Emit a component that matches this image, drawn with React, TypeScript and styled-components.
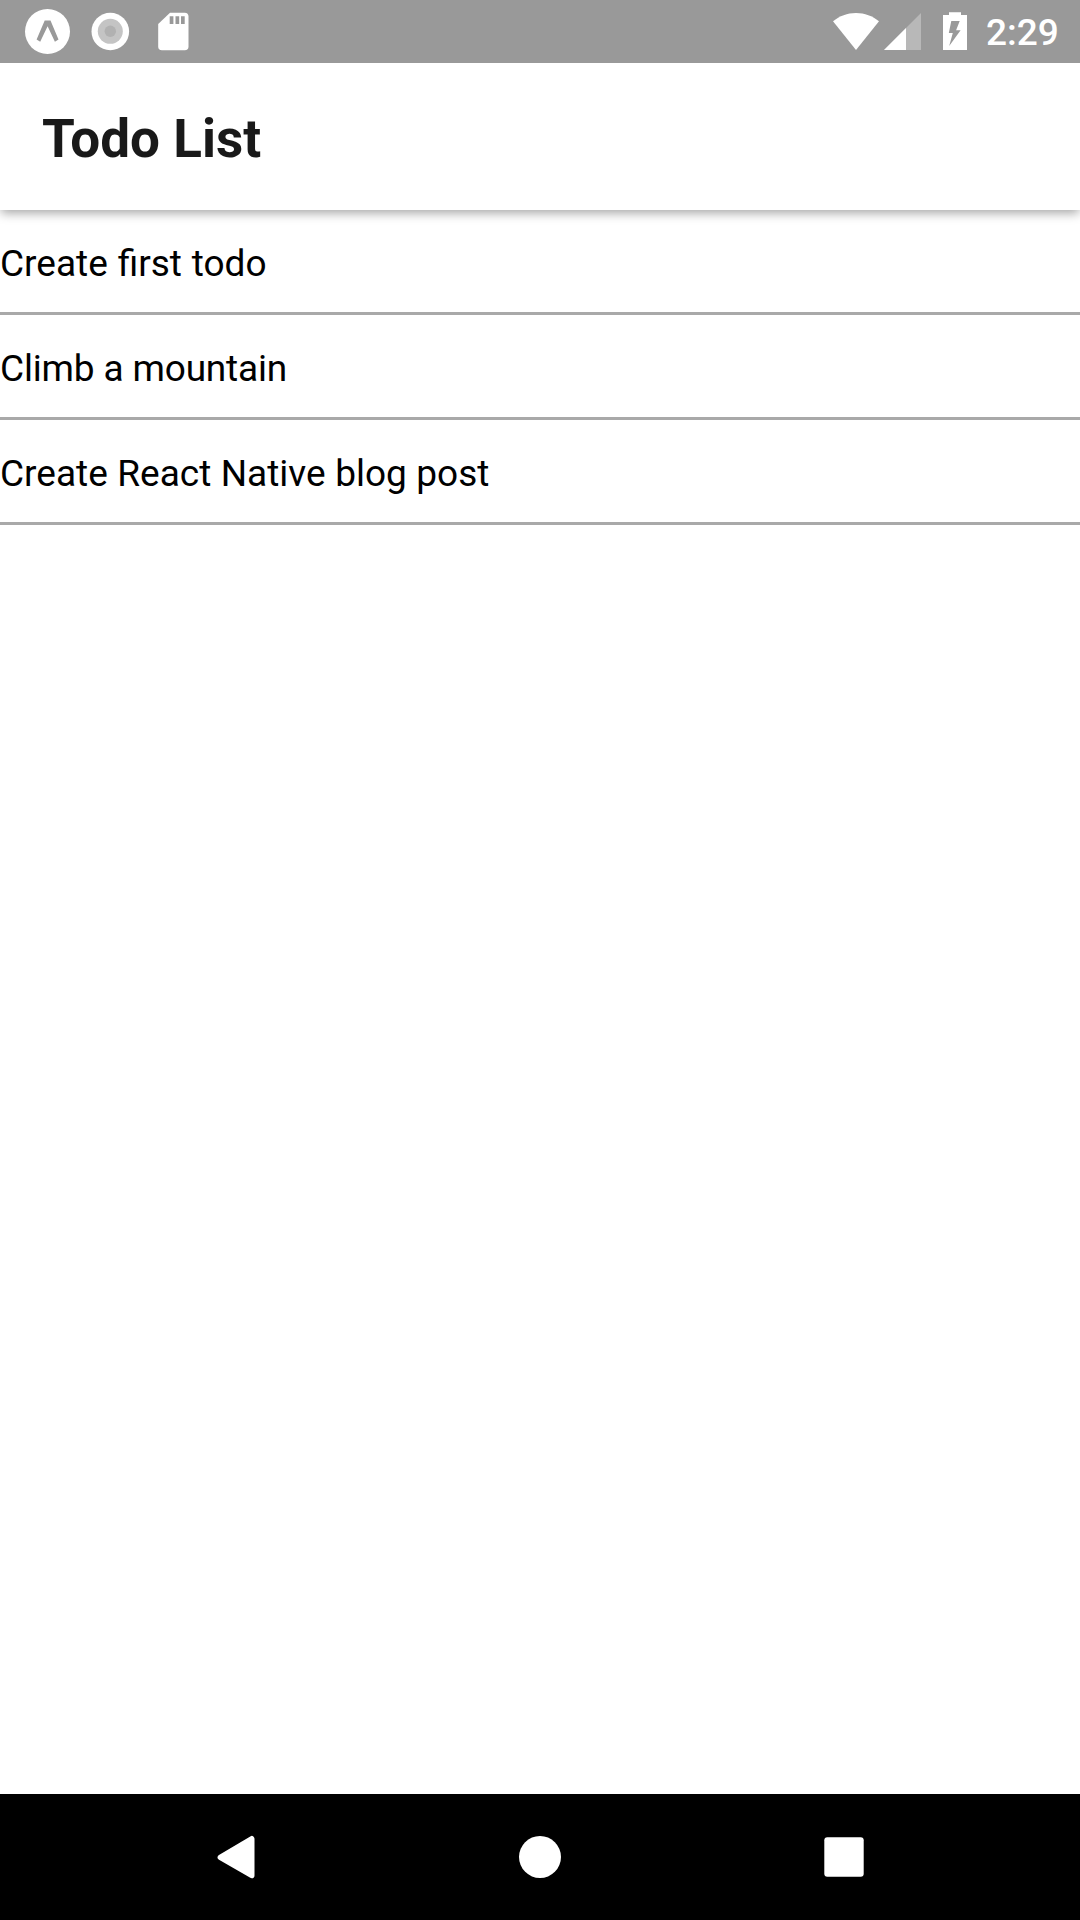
import React from "react";
import styled, { createGlobalStyle } from "styled-components";

const GlobalStyle = createGlobalStyle`
  *, *::before, *::after { box-sizing: border-box; }
  body {
    margin: 0;
    background: #fff;
    font-family: Roboto, "Noto Sans", sans-serif;
  }
`;

const Screen = styled.div`
  display: flex;
  flex-direction: column;
  width: 1080px;
  height: 1920px;
  background: #fff;
  overflow: hidden;
`;

const StatusBar = styled.div`
  display: flex;
  align-items: center;
  justify-content: space-between;
  flex: none;
  z-index: 1;
  height: 63px;
  padding: 0 21px;
  background: #999;
`;

const StatusGroup = styled.div`
  display: flex;
  align-items: center;
  height: 63px;
`;

const StatusIcon = styled.svg`
  display: block;
  flex: none;
  height: 63px;
`;

const Clock = styled.time`
  width: 74px;
  padding: 2px 0 0 1px;
  color: #fff;
  font-size: 37px;
  font-weight: 500;
  line-height: 43px;
  white-space: nowrap;
`;

const Header = styled.header`
  display: flex;
  align-items: center;
  flex: none;
  height: 147px;
  padding: 5px 42px 0;
  background: #fff;
  box-shadow: 0 4px 10px -1px rgba(0, 0, 0, 0.36);
`;

const Title = styled.h1`
  margin: 0;
  color: rgba(0, 0, 0, 0.9);
  font-size: 53px;
  font-weight: 700;
  line-height: 62px;
`;

const List = styled.ul`
  flex: 1;
  margin: 0;
  padding: 0;
  list-style: none;
`;

const Row = styled.li<{ $tracking: string; $wordGap: string }>`
  display: flex;
  align-items: center;
  height: 105px;
  padding-top: 4px;
  border-bottom: 3px solid #a9a9a9;
  color: #000;
  font-size: 37px;
  letter-spacing: ${(p) => p.$tracking};
  word-spacing: ${(p) => p.$wordGap};
  line-height: 43px;
`;

const NavBar = styled.nav`
  display: flex;
  justify-content: center;
  flex: none;
  height: 126px;
  background: #000;
`;

const NavButton = styled.button`
  display: flex;
  align-items: center;
  justify-content: center;
  width: 304px;
  height: 126px;
  padding: 0;
  border: 0;
  background: none;
`;

const todos = [
  { text: "Create first todo", tracking: "normal", wordGap: "0.7px" },
  { text: "Climb a mountain", tracking: "-0.17px", wordGap: "normal" },
  { text: "Create React Native blog post", tracking: "normal", wordGap: "0.3px" },
];

export default function App() {
  return (
    <>
      <GlobalStyle />
      <Screen>
        <StatusBar>
          <StatusGroup>
            <StatusIcon width="63" viewBox="21 0 63 63">
              <circle cx="47.5" cy="31.5" r="22.5" fill="#fff" />
              <path d="M44.7 20.4h5.8l8 19.1-3.6 2.2-7.3-15.4-7.4 15.4-3.6-2.2z" fill="#999" />
            </StatusIcon>
            <StatusIcon width="63" viewBox="84 0 63 63">
              <circle cx="110.3" cy="31.5" r="18.8" fill="#fff" />
              <circle cx="110.3" cy="31.3" r="12.5" fill="#c4c4c4" />
              <circle cx="110.3" cy="31.3" r="5.7" fill="#b1b1b1" />
            </StatusIcon>
            <StatusIcon width="63" viewBox="147 0 63 63">
              <path
                d="M170 12.7h14.7a3.8 3.8 0 0 1 3.8 3.8v30a3.8 3.8 0 0 1-3.8 3.8h-22.7a3.8 3.8 0 0 1-3.8-3.8v-22.5z"
                fill="#fff"
              />
              <path d="M169.7 16.3h3.7v7.7h-3.7zM175.5 16.3h3.7v7.7h-3.7zM181 16.3h3.7v7.7h-3.7z" fill="#999" />
            </StatusIcon>
          </StatusGroup>
          <StatusGroup>
            <StatusIcon width="50" viewBox="831 0 50 63">
              <path d="M856 50 833 21.3C839.5 16 847.3 13 856 13s16.5 3 23 8.3z" fill="#fff" />
            </StatusIcon>
            <StatusIcon width="58" viewBox="881 0 58 63">
              <path d="M884 50 921 13v37z" fill="#b8b8b8" />
              <path d="M884 50 906 28v22z" fill="#fff" />
            </StatusIcon>
            <StatusIcon width="46" viewBox="939 0 46 63">
              <path d="M949 12.2h12V15h6v35h-24V15h6z" fill="#fff" />
              <path d="M951.3 21h8.4l-3.6 9.3h4.5L949.2 46l3.6-13h-4z" fill="#999" />
            </StatusIcon>
            <Clock>2:29</Clock>
          </StatusGroup>
        </StatusBar>
        <Header>
          <Title>Todo List</Title>
        </Header>
        <List>
          {todos.map((todo) => (
            <Row key={todo.text} $tracking={todo.tracking} $wordGap={todo.wordGap}>
              {todo.text}
            </Row>
          ))}
        </List>
        <NavBar>
          <NavButton aria-label="Back">
            <svg width="44" height="44" viewBox="214 1835 44 44">
              <path d="M220.4 1857.3 251.7 1838.8v36.6z" fill="#fff" stroke="#fff" strokeWidth="5.6" strokeLinejoin="round" />
            </svg>
          </NavButton>
          <NavButton aria-label="Home">
            <svg width="44" height="44" viewBox="0 0 44 44">
              <circle cx="22" cy="22" r="21" fill="#fff" />
            </svg>
          </NavButton>
          <NavButton aria-label="Recent apps">
            <svg width="44" height="44" viewBox="0 0 44 44">
              <rect x="2.3" y="2.3" width="39.4" height="39.4" rx="3" fill="#fff" />
            </svg>
          </NavButton>
        </NavBar>
      </Screen>
    </>
  );
}
